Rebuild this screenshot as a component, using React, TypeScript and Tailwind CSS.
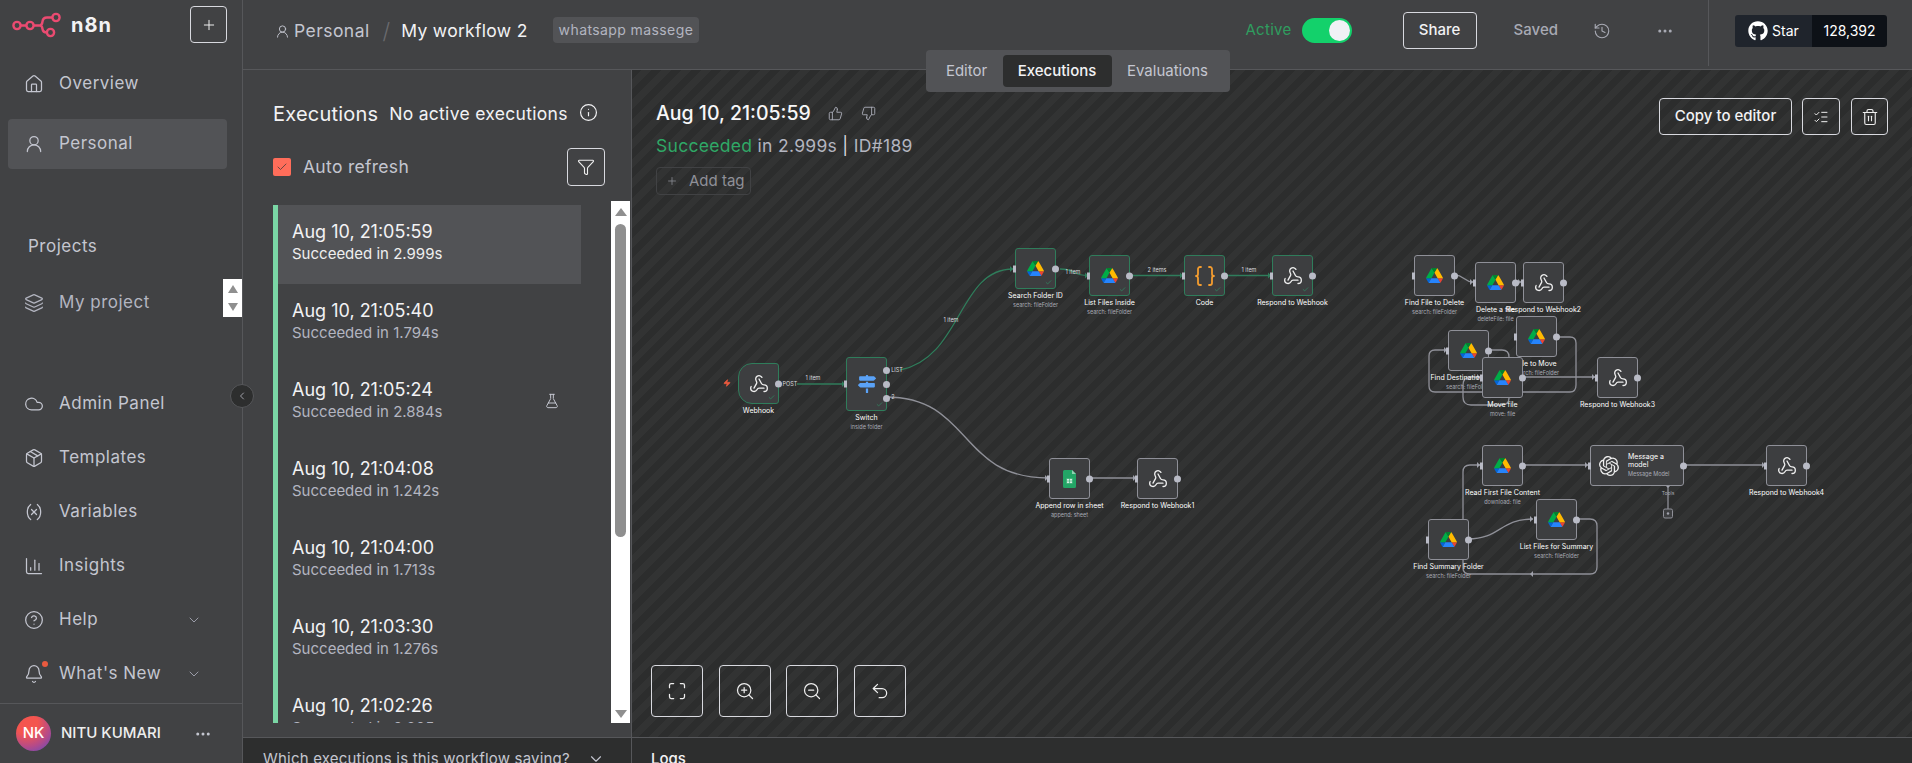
import {
  Bell,
  Braces,
  ChartColumn,
  Check,
  ChevronDown,
  ChevronLeft,
  CircleHelp,
  Cloud,
  Ellipsis,
  Filter,
  FlaskConical,
  History,
  House,
  Info,
  Layers,
  ListChecks,
  Maximize,
  Package,
  Plus,
  ThumbsDown,
  ThumbsUp,
  Trash2,
  Undo2,
  UserRound,
  Variable,
  Webhook,
  Zap,
  ZoomIn,
  ZoomOut,
} from "lucide-react";
import { FaGithub, FaMapSigns } from "react-icons/fa";
import { SiOpenai } from "react-icons/si";

const ORIGIN_X = 632;
const ORIGIN_Y = 70;

const Logo = () => (
  <svg width="50" height="30" viewBox="12 10 50 30" fill="none" stroke="#ea4b71" strokeWidth="2.4">
    <circle cx="17" cy="25.5" r="3.6" />
    <circle cx="30" cy="25.5" r="3.6" />
    <circle cx="56" cy="17.5" r="3.6" />
    <circle cx="50.5" cy="32.5" r="3.6" />
    <path d="M20.6 25.5H26.4M33.6 25.5H40M52.4 17.5H47Q43 17.5 42.5 21.5Q42 25.5 40 25.5Q42 25.5 42.5 29Q43 32.5 46.9 32.5" />
  </svg>
);

const DriveIcon = () => (
  <svg width="17" height="15" viewBox="0 0 87.3 78">
    <path d="m6.6 66.85 3.85 6.65c.8 1.4 1.95 2.5 3.3 3.3l13.75-23.8h-27.5c0 1.55.4 3.1 1.2 4.5z" fill="#0066da" />
    <path d="m43.65 25-13.75-23.8c-1.35.8-2.5 1.9-3.3 3.3l-25.4 44a9.06 9.06 0 0 0 -1.2 4.5h27.5z" fill="#00ac47" />
    <path d="m73.55 76.8c1.35-.8 2.5-1.9 3.3-3.3l1.6-2.75 7.65-13.25c.8-1.4 1.2-2.95 1.2-4.5h-27.502l5.852 11.5z" fill="#ea4335" />
    <path d="m43.65 25 13.75-23.8c-1.35-.8-2.9-1.2-4.5-1.2h-18.5c-1.6 0-3.15.45-4.5 1.2z" fill="#00832d" />
    <path d="m59.8 53h-32.3l-13.75 23.8c1.35.8 2.9 1.2 4.5 1.2h50.8c1.6 0 3.15-.45 4.5-1.2z" fill="#2684fc" />
    <path d="m73.4 26.5-12.7-22c-.8-1.4-1.95-2.5-3.3-3.3l-13.75 23.8 16.15 28h27.45c0-1.55-.4-3.1-1.2-4.5z" fill="#ffba00" />
  </svg>
);

const SheetsIcon = () => (
  <svg width="13" height="18" viewBox="0 0 13 18">
    <path d="M1.5 0H9L13 4V16.5A1.5 1.5 0 0 1 11.5 18H1.5A1.5 1.5 0 0 1 0 16.5V1.5A1.5 1.5 0 0 1 1.5 0Z" fill="#23a566" />
    <path d="M9 0L13 4H9Z" fill="#8ed1b1" />
    <path d="M3.5 8.5H9.5V13.5H3.5Z M6.5 8.5V13.5 M3.5 11H9.5" fill="#d5efe1" stroke="#23a566" strokeWidth="0.6" />
  </svg>
);

type NodeIcon = "drive" | "webhook" | "code" | "switch" | "sheets" | "openai";

type WorkflowNode = {
  x: number;
  y: number;
  h?: number;
  name: string;
  sub?: string;
  icon: NodeIcon;
  done?: boolean;
  trigger?: boolean;
  noIn?: boolean;
};

const nodes: WorkflowNode[] = [
  { x: 738, y: 363, name: "Webhook", icon: "webhook", done: true, trigger: true, noIn: true },
  { x: 846, y: 357, h: 54, name: "Switch", sub: "inside folder", icon: "switch", done: true },
  { x: 1015, y: 248, name: "Search Folder ID", sub: "search: fileFolder", icon: "drive", done: true },
  { x: 1089, y: 255, name: "List Files Inside", sub: "search: fileFolder", icon: "drive", done: true },
  { x: 1184, y: 255, name: "Code", icon: "code", done: true },
  { x: 1272, y: 255, name: "Respond to Webhook", icon: "webhook", done: true },
  { x: 1049, y: 458, name: "Append row in sheet", sub: "append: sheet", icon: "sheets" },
  { x: 1137, y: 458, name: "Respond to Webhook1", icon: "webhook" },
  { x: 1414, y: 255, name: "Find File to Delete", sub: "search: fileFolder", icon: "drive" },
  { x: 1475, y: 262, name: "Delete a file", sub: "deleteFile: file", icon: "drive" },
  { x: 1523, y: 262, name: "Respond to Webhook2", icon: "webhook" },
  { x: 1448, y: 330, name: "Find Destination Folder", sub: "search: fileFolder", icon: "drive" },
  { x: 1516, y: 316, name: "File to Move", sub: "search: fileFolder", icon: "drive" },
  { x: 1482, y: 357, name: "Move file", sub: "move: file", icon: "drive" },
  { x: 1597, y: 357, name: "Respond to Webhook3", icon: "webhook" },
  { x: 1482, y: 445, name: "Read First File Content", sub: "download: file", icon: "drive" },
  { x: 1766, y: 445, name: "Respond to Webhook4", icon: "webhook" },
  { x: 1428, y: 519, name: "Find Summary Folder", sub: "search: fileFolder", icon: "drive" },
  { x: 1536, y: 499, name: "List Files for Summary", sub: "search: fileFolder", icon: "drive" },
];

const greenEdges = [
  "M797 384H845",
  "M900 370C962 358 958 269 1013 269",
  "M1060 269C1076 269 1072 275.500 1088 275.500",
  "M1130 275.500H1183",
  "M1224 275.500H1271",
];

const greyEdges = [
  "M886 397C972 397 958 478 1048 478",
  "M1089 478H1136",
  "M1455 275C1464 275 1464 282 1473 282",
  "M1515 282H1521",
  "M1488 350H1502Q1509 350 1509 357V398Q1509 405 1501 405H1471Q1463 405 1463 397V385Q1463 377 1471 377H1480",
  "M1556 337H1570Q1576 337 1576 343V385Q1576 392 1570 392H1435Q1429 392 1429 386V356Q1429 350 1435 350H1447",
  "M1522 377H1595",
  "M1468 539C1500 539 1500 519 1533 519",
  "M1463 519V472Q1463 465 1470 465H1480",
  "M1522 465H1588",
  "M1684 465H1765",
  "M1576 519H1590Q1597 519 1597 526V567Q1597 574 1590 574H1470Q1463 574 1463 568V560",
  "M1668 485V509",
];

const arrowsGreen = [
  [845, 384],
  [1013, 269],
  [1088, 275.5],
  [1183, 275.5],
  [1271, 275.5],
];

const arrowsGrey = [
  [1048, 478],
  [1136, 478],
  [1473, 282],
  [1521, 282],
  [1480, 377],
  [1447, 350],
  [1595, 377],
  [1533, 519],
  [1480, 465],
  [1588, 465],
  [1765, 465],
];

const edgeLabels = [
  { x: 813, y: 378, t: "1 item" },
  { x: 951, y: 320, t: "1 item" },
  { x: 1073, y: 272, t: "1 item" },
  { x: 1157, y: 270, t: "2 items" },
  { x: 1249, y: 270, t: "1 item" },
  { x: 790, y: 384, t: "POST" },
  { x: 897, y: 370, t: "LIST" },
  { x: 893, y: 397, t: "2" },
];

const executions = [
  { time: "Aug 10, 21:05:59", took: "Succeeded in 2.999s", active: true },
  { time: "Aug 10, 21:05:40", took: "Succeeded in 1.794s" },
  { time: "Aug 10, 21:05:24", took: "Succeeded in 2.884s", flask: true },
  { time: "Aug 10, 21:04:08", took: "Succeeded in 1.242s" },
  { time: "Aug 10, 21:04:00", took: "Succeeded in 1.713s" },
  { time: "Aug 10, 21:03:30", took: "Succeeded in 1.276s" },
  { time: "Aug 10, 21:02:26", took: "Succeeded in 2.005s" },
];

const bottomNav = [
  { label: "Admin Panel", Icon: Cloud },
  { label: "Templates", Icon: Package },
  { label: "Variables", Icon: Variable },
  { label: "Insights", Icon: ChartColumn },
  { label: "Help", Icon: CircleHelp, chevron: true },
  { label: "What's New", Icon: Bell, chevron: true, dot: true },
];

const NodeGlyph = ({ icon }: { icon: NodeIcon }) => {
  if (icon === "drive") return <DriveIcon />;
  if (icon === "webhook") return <Webhook size={20} strokeWidth={1.6} className="text-[#eeeeee]" />;
  if (icon === "code") return <Braces size={24} strokeWidth={1.8} className="text-[#f39c2f]" />;
  if (icon === "switch") return <FaMapSigns size={18} className="text-[#5aa2f7]" />;
  if (icon === "sheets") return <SheetsIcon />;
  return <SiOpenai size={20} className="text-[#eeeeee]" />;
};

const CanvasNode = ({ n }: { n: WorkflowNode }) => {
  const h = n.h ?? 41;
  return (
    <div
      className="absolute flex w-[41px] flex-col items-center"
      style={{ left: n.x - ORIGIN_X, top: n.y - ORIGIN_Y }}
    >
      <div
        className={`relative flex w-[41px] items-center justify-center border bg-[#3d3e40] ${
          n.done ? "border-[#2f7d5b]" : "border-[#8f9098]"
        } ${n.trigger ? "rounded-l-[14px] rounded-r-[3px]" : "rounded-[3px]"}`}
        style={{ height: h }}
      >
        <NodeGlyph icon={n.icon} />
        {n.done && <Check size={7} strokeWidth={2} className="absolute bottom-[2px] right-[3px] text-[#2f9d6b]" />}
        {!n.noIn && <span className="absolute left-[-3px] top-1/2 h-[7px] w-[3px] -translate-y-1/2 bg-[#b9bbc6]" />}
        {n.icon === "switch" ? (
          <>
            <span className="absolute right-[-4px] top-[9px] size-[7px] rounded-full bg-[#b9bbc6]" />
            <span className="absolute right-[-4px] top-[23px] size-[7px] rounded-full bg-[#b9bbc6]" />
            <span className="absolute right-[-4px] top-[37px] size-[7px] rounded-full bg-[#b9bbc6]" />
          </>
        ) : (
          <span className="absolute right-[-4px] top-1/2 size-[7px] -translate-y-1/2 rounded-full bg-[#b9bbc6]" />
        )}
      </div>
      <div className="mt-[3px] whitespace-nowrap text-[7px] leading-[8px] text-white">{n.name}</div>
      {n.sub && <div className="mt-[2px] whitespace-nowrap text-[5.500px] leading-[7px] text-[#a8aab4]">{n.sub}</div>}
    </div>
  );
};

const WorkflowCanvas = () => (
  <>
    <svg width="1280" height="667" className="absolute left-0 top-0" fill="none">
      <g transform={`translate(${-ORIGIN_X},${-ORIGIN_Y})`}>
        {greenEdges.map((d) => (
          <path key={d} d={d} stroke="#2f7d5b" strokeWidth="1.300" />
        ))}
        {greyEdges.map((d) => (
          <path key={d} d={d} stroke="#8f9098" strokeWidth="1.300" />
        ))}
        {arrowsGreen.map(([x, y]) => (
          <path key={`${x}-${y}`} d={`M${x - 3} ${y - 3}L${x} ${y}L${x - 3} ${y + 3}Z`} fill="#2f7d5b" />
        ))}
        {arrowsGrey.map(([x, y]) => (
          <path key={`${x}-${y}`} d={`M${x - 3} ${y - 3}L${x} ${y}L${x - 3} ${y + 3}Z`} fill="#a0a2ac" />
        ))}
        <path d="M1530 574L1533 571V577Z" fill="#a0a2ac" />
        <path d="M1668 482L1671 485L1668 488L1665 485Z" fill="#a0a2ac" />
        <rect x="1663.500" y="509" width="9" height="9" rx="1.500" stroke="#8f9098" fill="#3d3e40" />
        <circle cx="1668" cy="513.500" r="1.200" fill="#a0a2ac" />
      </g>
    </svg>
    {edgeLabels.map((l) => (
      <span
        key={`${l.x}-${l.y}`}
        className="absolute -translate-x-1/2 -translate-y-1/2 whitespace-nowrap text-[5.500px] text-[#d8d9df]"
        style={{ left: l.x - ORIGIN_X, top: l.y - ORIGIN_Y }}
      >
        {l.t}
      </span>
    ))}
    <Zap size={8} className="absolute left-[91px] top-[309px] fill-[#ea5a3f] text-[#ea5a3f]" />
    {nodes.map((n) => (
      <CanvasNode key={n.name} n={n} />
    ))}
    <div className="absolute left-[958px] top-[375px] flex h-[41px] w-[94px] items-center gap-[8px] rounded-[3px] border border-[#8f9098] bg-[#3d3e40] pl-[8px]">
      <NodeGlyph icon="openai" />
      <div className="ml-[1px]">
        <div className="w-[40px] text-[7px] leading-[8px] text-white">Message a model</div>
        <div className="mt-[2px] whitespace-nowrap text-[5.500px] leading-[7px] text-[#a8aab4]">Message Model</div>
      </div>
      <span className="absolute left-[-3px] top-1/2 h-[7px] w-[3px] -translate-y-1/2 bg-[#b9bbc6]" />
      <span className="absolute right-[-4px] top-1/2 size-[7px] -translate-y-1/2 rounded-full bg-[#b9bbc6]" />
    </div>
    <span className="absolute left-[1036px] top-[420px] -translate-x-1/2 text-[5px] text-[#a8aab4]">Tools</span>
  </>
);

const Sidebar = () => (
  <aside className="relative flex h-full w-[243px] shrink-0 flex-col border-r border-[#56575a] bg-[#414244]">
    <div className="flex h-[59px] shrink-0 items-start justify-between pl-[12px] pr-[15px] pt-[6px]">
      <div className="flex h-[37px] items-center gap-[9px]">
        <Logo />
        <span className="text-[20px] font-bold tracking-[1px] text-[#f2f2f4]">n8n</span>
      </div>
      <button className="flex size-[37px] items-center justify-center rounded-[4px] border border-[#d8d9df] text-[#eeeeee]">
        <Plus size={16} strokeWidth={1.500} />
      </button>
    </div>
    <nav className="flex flex-col gap-[10px] pl-[8px] pr-[15px]">
      <div className="flex h-[50px] items-center gap-[15px] pl-[16px] text-[#c4c6d0]">
        <House size={20} strokeWidth={1.500} />
        <span className="text-[17px] tracking-[0.5px]">Overview</span>
      </div>
      <div className="flex h-[50px] items-center gap-[15px] rounded-[4px] bg-[#525356] pl-[16px] text-[#c4c6d0]">
        <UserRound size={20} strokeWidth={1.500} />
        <span className="text-[17px] tracking-[0.5px]">Personal</span>
      </div>
    </nav>
    <div className="mt-[65px] h-[24px] pl-[28px] text-[17px] leading-[24px] tracking-[0.5px] text-[#c4c6d0]">Projects</div>
    <div className="relative mt-[20px] flex h-[50px] items-center gap-[15px] pl-[24px] text-[#b3b5c0]">
      <Layers size={20} strokeWidth={1.500} />
      <span className="text-[17px] tracking-[0.5px]">My project</span>
      <div className="absolute right-0 top-[1px] flex h-[38px] w-[19px] flex-col items-center justify-between bg-white py-[6px]">
        <span className="h-0 w-0 border-x-[5px] border-b-[8px] border-x-transparent border-b-[#8f8f8f]" />
        <span className="h-0 w-0 border-x-[5px] border-t-[8px] border-x-transparent border-t-[#8f8f8f]" />
      </div>
    </div>
    <nav className="mt-auto flex flex-col pb-[2px]">
      {bottomNav.map(({ label, Icon, chevron, dot }) => (
        <div key={label} className="flex h-[54px] items-center gap-[15px] pl-[24px] pr-[40px] text-[#c4c6d0]">
          <span className="relative">
            <Icon size={20} strokeWidth={1.500} />
            {dot && <span className="absolute right-[-4px] top-[-3px] size-[6px] rounded-full bg-[#ea5a3f]" />}
          </span>
          <span className="text-[17px] tracking-[0.5px]">{label}</span>
          {chevron && <ChevronDown size={16} strokeWidth={1.500} className="ml-auto text-[#9a9ca8]" />}
        </div>
      ))}
    </nav>
    <div className="flex h-[60px] shrink-0 items-center border-t border-[#56575a] pl-[16px] pr-[30px]">
      <div className="flex size-[35px] items-center justify-center rounded-full bg-[radial-gradient(circle_at_30%_20%,#f4554f_30%,#b34a8a_65%,#5a4bc4_100%)] text-[15px] font-medium text-white">
        NK
      </div>
      <span className="ml-[10px] text-[15px] font-medium text-[#eeeeee]">NITU KUMARI</span>
      <Ellipsis size={18} className="ml-auto text-[#c4c6d0]" />
    </div>
    <button className="absolute right-[-12px] top-[384px] z-20 flex size-[24px] items-center justify-center rounded-full border border-[#56575a] bg-[#2d2e2e] text-[#c4c6d0]">
      <ChevronLeft size={12} strokeWidth={1.500} />
    </button>
  </aside>
);

const Header = () => (
  <header className="flex h-[70px] shrink-0 items-center border-b border-[#56575a] bg-[#414244] pb-[8px] pl-[32px]">
    <div className="mt-[2px] flex items-center">
      <UserRound size={15} strokeWidth={1.500} className="text-[#c4c6d0]" />
      <span className="ml-[4px] text-[17.500px] tracking-[0.45px] text-[#c4c6d0]">Personal</span>
      <span className="ml-[13px] text-[22px] font-light text-[#6a6b6f]">/</span>
      <span className="ml-[11px] text-[17.500px] tracking-[0.3px] text-[#f2f2f4]">My workflow 2</span>
      <span className="ml-[25px] flex h-[26px] -translate-y-[2px] items-center rounded-[4px] bg-[#525356] px-[6px] text-[14px] tracking-[0.4px] text-[#b3b5c0]">
        whatsapp massege
      </span>
    </div>
    <div className="ml-auto flex items-center">
      <span className="text-[15px] tracking-[0.3px] text-[#2f9d5f]">Active</span>
      <span className="ml-[10px] flex h-[25px] w-[50px] items-center justify-end rounded-full bg-[#13d16b] pr-[2px]">
        <span className="size-[21px] rounded-full bg-[#f0f1f5]" />
      </span>
      <button className="ml-[51px] flex h-[37px] w-[74px] items-center justify-center rounded-[4px] border border-[#d8d9df] text-[15px] font-medium text-[#f2f2f4]">
        Share
      </button>
      <span className="ml-[37px] text-[15px] font-medium text-[#a8aab4]">Saved</span>
      <History size={18} strokeWidth={1.500} className="ml-[35px] text-[#a8aab4]" />
      <Ellipsis size={18} className="ml-[45px] text-[#a8aab4]" />
      <div className="ml-[34px] mr-[25px] flex h-[70px] items-center border-l border-[#56575a] pl-[26px]">
        <div className="flex h-[32px] w-[152px] overflow-hidden rounded-[3px] text-[14px] text-white">
          <div className="flex w-[77px] items-center justify-center gap-[4px] bg-[#1f242c]">
            <FaGithub size={20} />
            <span>Star</span>
          </div>
          <div className="flex flex-1 items-center justify-center bg-[#0d1117]">128,392</div>
        </div>
      </div>
    </div>
  </header>
);

const ExecutionsPanel = () => (
  <section className="flex h-full w-[389px] shrink-0 flex-col border-r border-[#56575a] bg-[#414244]">
    <div className="flex h-[131px] shrink-0 flex-col pl-[30px] pr-[26px] pt-[30px]">
      <div className="flex h-[28px] items-center">
        <span className="text-[20px] tracking-[0.2px] text-[#f2f2f4]">Executions</span>
        <span className="ml-[11px] text-[17.500px] tracking-[0.3px] text-[#f2f2f4]">No active executions</span>
        <Info size={19} strokeWidth={1.500} className="ml-[11px] -translate-y-[2px] text-[#f2f2f4]" />
      </div>
      <div className="mt-[20px] flex h-[38px] items-center">
        <span className="flex size-[18px] items-center justify-center rounded-[2px] bg-[#ff6d5a]">
          <Check size={12} strokeWidth={1.500} className="text-[#3a3a3a]" />
        </span>
        <span className="ml-[12px] text-[17.500px] tracking-[0.3px] text-[#c4c6d0]">Auto refresh</span>
        <button className="ml-auto flex size-[38px] items-center justify-center rounded-[4px] border border-[#d8d9df] text-[#eeeeee]">
          <Filter size={18} strokeWidth={1.500} />
        </button>
      </div>
    </div>
    <div className="flex h-[522px] shrink-0 pl-[30px] pr-px">
      <div className="h-full w-[338px] overflow-hidden pt-[4px]">
        <div className="h-full border-l-[5px] border-[#7ad6a5]">
          {executions.map((e) => (
            <div
              key={e.time}
              className={`flex h-[79px] w-[303px] pl-[14px] pr-[21px] pt-[16px] ${e.active ? "bg-[#525356]" : ""}`}
            >
              <div>
                <div className="text-[18px] leading-[22px] text-[#f2f2f4]">{e.time}</div>
                <div className={`text-[15px] leading-[22px] ${e.active ? "text-[#eeeeee]" : "text-[#b3b5c0]"}`}>{e.took}</div>
              </div>
              {e.flask && <FlaskConical size={16} strokeWidth={1.500} className="ml-auto mt-[14px] text-[#c4c6d0]" />}
            </div>
          ))}
        </div>
      </div>
      <div className="flex h-full w-[19px] flex-col items-center bg-white pt-[7px]">
        <span className="h-0 w-0 border-x-[6px] border-b-[8px] border-x-transparent border-b-[#8f8f8f]" />
        <span className="mt-[8px] h-[313px] w-[11px] rounded-full bg-[#8f8f8f]" />
        <span className="mb-[5px] mt-auto h-0 w-0 border-x-[6px] border-t-[8px] border-x-transparent border-t-[#8f8f8f]" />
      </div>
    </div>
  </section>
);

const CanvasArea = () => (
  <section className="relative flex-1 overflow-hidden bg-[repeating-linear-gradient(135deg,#2c2d2d_0,#2c2d2d_7px,#323333_7px,#323333_14px)]">
    <WorkflowCanvas />
    <div className="absolute left-[24px] top-[30px] flex flex-col items-start">
      <div className="flex h-[26px] items-center">
        <span className="text-[19.500px] font-medium leading-[26px] text-[#f7f7f8]">Aug 10, 21:05:59</span>
        <ThumbsUp size={15} strokeWidth={1.500} className="ml-[17px] text-[#a8aab4]" />
        <ThumbsDown size={15} strokeWidth={1.500} className="ml-[18px] text-[#a8aab4]" />
      </div>
      <div className="mt-[7px] h-[26px] text-[17.500px] leading-[26px] tracking-[0.3px] text-[#b3b5c0]">
        <span className="text-[#2fa866]">Succeeded</span> in 2.999s <span className="text-[#d8d9df]">|</span> ID#189
      </div>
      <div className="mt-[8px] flex h-[28px] w-[95px] items-center gap-[11px] rounded-[4px] border border-[#414244] pl-[9px] text-[15px] text-[#8f9098]">
        <Plus size={12} strokeWidth={1.500} />
        <span>Add tag</span>
      </div>
    </div>
    <div className="absolute right-[24px] top-[28px] flex items-center">
      <button className="flex h-[37px] w-[133px] items-center justify-center rounded-[4px] border border-[#d8d9df] text-[15px] font-medium text-[#f2f2f4]">
        Copy to editor
      </button>
      <button className="ml-[10px] flex h-[37px] w-[38px] items-center justify-center rounded-[4px] border border-[#d8d9df] text-[#eeeeee]">
        <ListChecks size={16} strokeWidth={1.500} />
      </button>
      <button className="ml-[11px] flex h-[37px] w-[37px] items-center justify-center rounded-[4px] border border-[#d8d9df] text-[#eeeeee]">
        <Trash2 size={18} strokeWidth={1.500} />
      </button>
    </div>
    <div className="absolute bottom-[20px] left-[19px] flex gap-[15.500px]">
      {[Maximize, ZoomIn, ZoomOut, Undo2].map((Icon, i) => (
        <button
          key={i}
          className="flex size-[52px] items-center justify-center rounded-[4px] border border-[#d8d9df] text-[#eeeeee]"
        >
          <Icon size={20} strokeWidth={1.500} />
        </button>
      ))}
    </div>
  </section>
);

export default function App() {
  return (
    <div className="flex h-[763px] w-[1912px] overflow-hidden bg-[#414244] [font-family:Inter,sans-serif]">
      <Sidebar />
      <main className="relative flex h-full min-w-0 flex-1 flex-col">
        <Header />
        <div className="flex h-[667px] shrink-0">
          <ExecutionsPanel />
          <CanvasArea />
        </div>
        <div className="flex h-[26px] shrink-0 overflow-hidden border-t border-[#56575a] bg-[#2d2e2e]">
          <div className="flex w-[389px] shrink-0 items-start border-r border-[#56575a] pl-[20px] pr-[26px] pt-[10px] text-[15px] leading-[22px] tracking-[0.2px] text-[#c4c6d0]">
            <span>Which executions is this workflow saving?</span>
            <ChevronDown size={18} strokeWidth={1.500} className="ml-auto mt-[2px]" />
          </div>
          <div className="pl-[19px] pt-[10px] text-[15px] font-medium leading-[22px] text-[#f2f2f4]">Logs</div>
        </div>
        <div className="absolute left-1/2 top-[50px] z-10 flex h-[42px] w-[304px] -translate-x-1/2 items-center rounded-[4px] bg-[#525356] pl-[5px] text-[15px]">
          <span className="flex h-[32px] w-[72px] items-center justify-center text-[#c4c6d0]">Editor</span>
          <span className="flex h-[32px] w-[109px] items-center justify-center rounded-[4px] bg-[#2d2e2e] font-medium text-[#f2f2f4]">
            Executions
          </span>
          <span className="flex h-[32px] w-[112px] items-center justify-center text-[#c4c6d0]">Evaluations</span>
        </div>
      </main>
    </div>
  );
}
